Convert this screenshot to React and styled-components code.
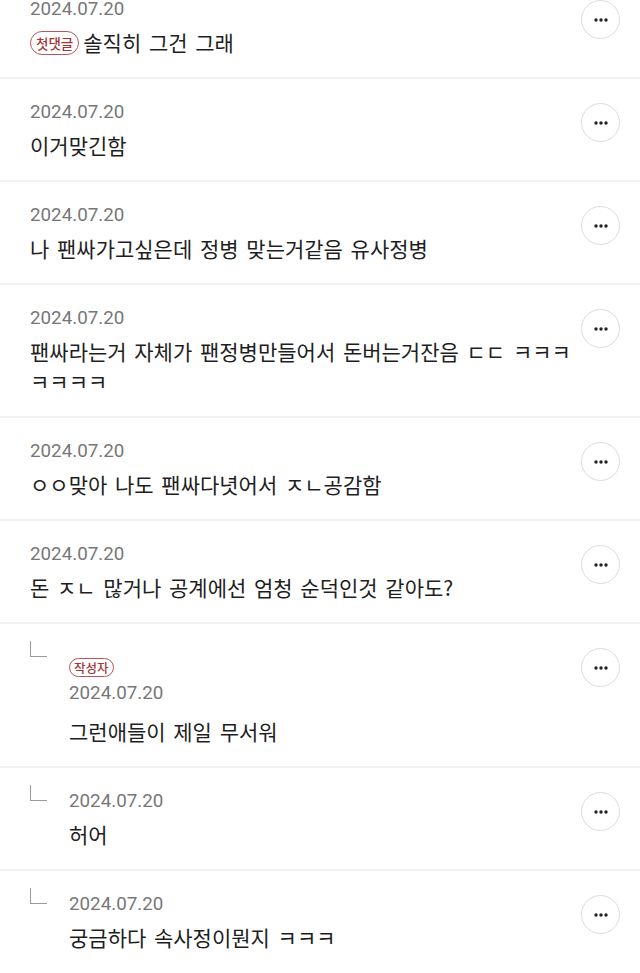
import React from "react";
import styled, { createGlobalStyle } from "styled-components";

const Global = createGlobalStyle`
  html, body { margin: 0; padding: 0; background: #fff; }
  body { font-family: "Noto Sans CJK KR", "Noto Sans", sans-serif; overflow: hidden; }
`;

const List = styled.div`
  margin-top: -24px;
  display: flex;
  flex-direction: column;
`;

const Row = styled.div`
  display: flex;
  align-items: flex-start;
  padding: 22px 20px ${p => (p.$last ? 60 : 20)}px 30px;
  border-bottom: 2px solid #f1f1f1;
`;

const ReplyMark = styled.div`
  flex: 0 0 39px;
  height: 20px;
  margin-top: -5px;
  position: relative;
  &::before {
    content: "";
    position: absolute;
    left: 0;
    top: 0;
    width: 16px;
    height: 15px;
    border-left: 1.5px solid #9a9a9a;
    border-bottom: 1.5px solid #9a9a9a;
  }
`;

const Body = styled.div`
  flex: 1;
  min-width: 0;
  display: flex;
  flex-direction: column;
  align-items: flex-start;
`;

const Date = styled.div`
  font-family: Roboto, "Noto Sans", sans-serif;
  font-size: 18.8px;
  line-height: 24px;
  color: #777;
  margin-top: -1px;
  margin-bottom: ${p => (p.$roomy ? 11 : 6)}px;
`;

const Text = styled.div`
  font-size: 21px;
  line-height: 30px;
  color: #1e1e1e;
  word-spacing: 3px;
  word-break: break-all;
`;

const Badge = styled.span`
  display: inline-flex;
  align-items: center;
  justify-content: center;
  vertical-align: middle;
  box-sizing: border-box;
  height: ${p => p.$h}px;
  padding: 0 ${p => p.$px}px;
  border: 1.3px solid #b5575a;
  border-radius: 999px;
  color: #a3343a;
  font-size: ${p => p.$fs}px;
  line-height: 1;
  font-weight: 500;
  word-spacing: 0;
  margin-top: ${p => p.$mt || 0}px;
  margin-bottom: ${p => p.$mb || 0}px;
  margin-right: ${p => p.$mr || 0}px;
  position: relative;
  top: ${p => p.$top || 0}px;
`;

const MoreButton = styled.button`
  flex: 0 0 39px;
  width: 39px;
  height: 39px;
  margin-top: 2px;
  border-radius: 50%;
  border: 1px solid #dcdcdc;
  background: #fff;
  padding: 0;
  display: flex;
  align-items: center;
  justify-content: center;
`;

const Dots = () => (
  <svg width="14" height="4" viewBox="0 0 14 4">
    <circle cx="2" cy="2" r="1.7" fill="#222" />
    <circle cx="7" cy="2" r="1.7" fill="#222" />
    <circle cx="12" cy="2" r="1.7" fill="#222" />
  </svg>
);

const comments = [
  { text: "솔직히 그건 그래", first: true },
  { text: "이거맞긴함" },
  { text: "나 팬싸가고싶은데 정병 맞는거같음 유사정병" },
  { text: "팬싸라는거 자체가 팬정병만들어서 돈버는거잔음 ㄷㄷ ㅋㅋㅋㅋㅋㅋㅋ" },
  { text: "ㅇㅇ맞아 나도 팬싸다녓어서 ㅈㄴ공감함" },
  { text: "돈 ㅈㄴ 많거나 공계에선 엄청 순덕인것 같아도?" },
  { text: "그런애들이 제일 무서워", reply: true, author: true },
  { text: "허어", reply: true },
  { text: "궁금하다 속사정이뭔지 ㅋㅋㅋ", reply: true, last: true },
];

export default function App() {
  return (
    <>
      <Global />
      <List>
        {comments.map((c, i) => (
          <Row key={i} $last={c.last}>
            {c.reply && <ReplyMark />}
            <Body>
              {c.author && (
                <Badge $h={19} $px={4} $fs={12.5} $mt={12} $mb={5}>작성자</Badge>
              )}
              <Date $roomy={c.author}>2024.07.20</Date>
              <Text>
                {c.first && (
                  <Badge $h={24} $px={5} $fs={13.5} $mr={4} $top={-2}>첫댓글</Badge>
                )}
                {c.text}
              </Text>
            </Body>
            <MoreButton aria-label="더보기">
              <Dots />
            </MoreButton>
          </Row>
        ))}
      </List>
    </>
  );
}
